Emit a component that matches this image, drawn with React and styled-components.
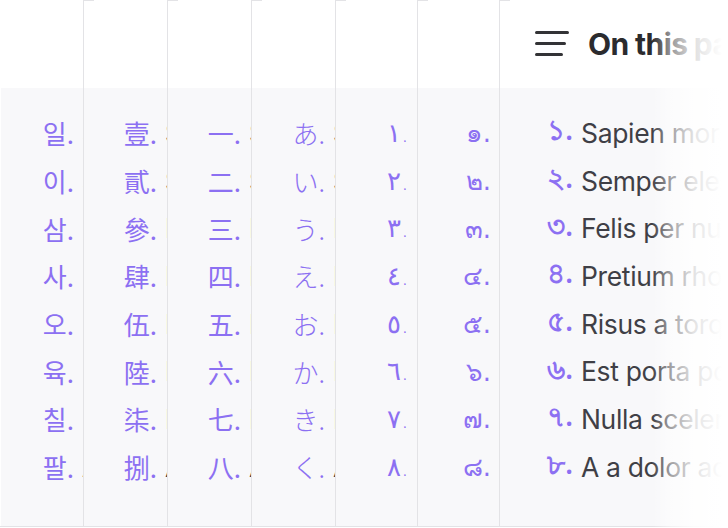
import React from "react";
import styled, { createGlobalStyle } from "styled-components";

const Global = createGlobalStyle`
  html, body { margin: 0; padding: 0; background: #ffffff; }
  body { font-family: Inter, "Noto Sans", sans-serif; }
`;

const Stack = styled.div`
  position: relative;
  display: flex;
  width: 728px;
  height: 527px;
  overflow: hidden;
  &::after {
    content: "";
    position: absolute;
    top: 0;
    right: 0;
    bottom: 0;
    width: 76px;
    background: linear-gradient(
      to right,
      rgba(255, 255, 255, 0) 0%,
      rgba(255, 255, 255, 0.5) 24%,
      rgba(255, 255, 255, 0.85) 55%,
      #ffffff 92%
    );
    pointer-events: none;
  }
`;

const Panel = styled.section`
  position: relative;
  box-sizing: border-box;
  flex: ${(p) => (p.$w ? `0 0 ${p.$w}px` : "1 1 auto")};
  min-width: 0;
  overflow: hidden;
  display: flex;
  flex-direction: column;
  border-left: ${(p) => (p.$first ? "none" : "1px solid #e3e3e6")};
  border-bottom: 1px solid #e3e3e6;
  &::before {
    content: "";
    position: absolute;
    top: 0;
    left: 0;
    width: ${(p) => (p.$first ? 0 : 10)}px;
    height: 1px;
    background: #e3e3e6;
  }
`;

const Inner = styled.div`
  width: 320px;
  flex: 1 0 auto;
  display: flex;
  flex-direction: column;
  margin-left: ${(p) => (p.$first ? 1 : 0)}px;
`;

const Header = styled.header`
  height: 88px;
  flex: 0 0 88px;
  background: #ffffff;
  display: flex;
  align-items: center;
  gap: 19px;
  padding-left: 35px;
  box-sizing: border-box;
`;

const Title = styled.h2`
  margin: 0;
  font-family: Inter, "Noto Sans", sans-serif;
  font-weight: 700;
  font-size: 30px;
  letter-spacing: -0.6px;
  color: #2b2b2e;
  white-space: nowrap;
`;

const List = styled.ol`
  list-style: none;
  margin: 0;
  padding: 21px 0 0 0;
  flex: 1 1 auto;
  background: #f8f8fa;
`;

const Item = styled.li`
  display: grid;
  grid-template-columns: 81px auto;
  height: 47.7px;
  align-items: center;
`;

const Marker = styled.span`
  text-align: right;
  padding-right: 8px;
  font-family: ${(p) => p.$font};
  font-size: ${(p) => p.$size || 26}px;
  font-weight: ${(p) => p.$weight || 400};
  color: #8c70f2;
  white-space: nowrap;
`;

const Label = styled.span`
  font-family: Inter, "Noto Sans", sans-serif;
  font-size: 26.5px;
  letter-spacing: -0.35px;
  color: #3f3f46;
  white-space: nowrap;
`;

const MenuIcon = () => (
  <svg width="34" height="26" viewBox="0 0 34 26" aria-hidden="true">
    <g stroke="#333336" strokeWidth="3" strokeLinecap="round">
      <line x1="1.5" y1="1.5" x2="32.5" y2="1.5" />
      <line x1="1.5" y1="12.5" x2="29.5" y2="12.5" />
      <line x1="1.5" y1="23.5" x2="26.5" y2="23.5" />
    </g>
  </svg>
);

const items = [
  "Sapien morbi",
  "Semper eleifend",
  "Felis per nunc",
  "Pretium rhoncus",
  "Risus a torquent",
  "Est porta potenti",
  "Nulla scelerisque",
  "A a dolor accumsan",
];

const columns = [
  { w: 83, font: `"Noto Sans CJK KR", sans-serif`, m: ["일", "이", "삼", "사", "오", "육", "칠", "팔"] },
  { w: 84, font: `"Noto Sans CJK TC", sans-serif`, m: ["壹", "貳", "參", "肆", "伍", "陸", "柒", "捌"] },
  { w: 84, font: `"Noto Sans CJK SC", sans-serif`, m: ["一", "二", "三", "四", "五", "六", "七", "八"] },
  { w: 84, font: `"Noto Sans CJK JP", sans-serif`, weight: 300, m: ["あ", "い", "う", "え", "お", "か", "き", "く"] },
  { w: 82, font: `"DejaVu Sans", "Noto Sans", sans-serif`, weight: 200, m: ["١", "٢", "٣", "٤", "٥", "٦", "٧", "٨"] },
  { w: 82, font: `"DejaVu Sans", "Noto Sans", sans-serif`, m: ["๑", "๒", "๓", "๔", "๕", "๖", "๗", "๘"] },
  { w: 0, font: `"Noto Sans", "DejaVu Sans", sans-serif`, size: 28, weight: 600, m: ["১", "২", "৩", "৪", "৫", "৬", "৭", "৮"] },
];

export default function App() {
  return (
    <>
      <Global />
      <Stack>
        {columns.map((c, i) => {
          const last = i === columns.length - 1;
          return (
            <Panel key={i} $w={c.w || undefined} $first={i === 0}>
              <Inner $first={i === 0}>
                <Header>
                  {last && (
                    <>
                      <MenuIcon />
                      <Title>On this page</Title>
                    </>
                  )}
                </Header>
                <List>
                  {items.map((t, j) => (
                    <Item key={j}>
                      <Marker $font={c.font} $size={c.size} $weight={c.weight}>
                        {c.m[j]}.
                      </Marker>
                      <Label>{t}</Label>
                    </Item>
                  ))}
                </List>
              </Inner>
            </Panel>
          );
        })}
      </Stack>
    </>
  );
}
